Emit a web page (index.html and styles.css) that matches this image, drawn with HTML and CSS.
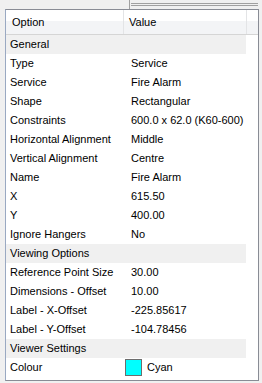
FILE: index.html
```html
<!DOCTYPE html>
<html lang="en">
<head>
    <meta charset="UTF-8">
    <title>Properties</title>
    <link rel="stylesheet" href="styles.css">
</head>
<body>
    <div class="topbar">
        <div class="grip"></div>
        <div class="rails"></div>
    </div>
    <div class="frame">
        <div class="panel">
            <div class="head">
                <div class="hcell col-opt">Option</div>
                <div class="hcell col-val">Value</div>
                <div class="hcell col-pad"></div>
            </div>
            <div class="rows">
                <div class="group">General</div>
                <div class="row"><span class="opt">Type</span><span class="val">Service</span></div>
                <div class="row"><span class="opt">Service</span><span class="val">Fire Alarm</span></div>
                <div class="row"><span class="opt">Shape</span><span class="val">Rectangular</span></div>
                <div class="row"><span class="opt">Constraints</span><span class="val">600.0 x 62.0 (K60-600)</span></div>
                <div class="row"><span class="opt">Horizontal Alignment</span><span class="val">Middle</span></div>
                <div class="row"><span class="opt">Vertical Alignment</span><span class="val">Centre</span></div>
                <div class="row"><span class="opt">Name</span><span class="val">Fire Alarm</span></div>
                <div class="row"><span class="opt">X</span><span class="val">615.50</span></div>
                <div class="row"><span class="opt">Y</span><span class="val">400.00</span></div>
                <div class="row"><span class="opt">Ignore Hangers</span><span class="val">No</span></div>
                <div class="group">Viewing Options</div>
                <div class="row"><span class="opt">Reference Point Size</span><span class="val">30.00</span></div>
                <div class="row"><span class="opt">Dimensions - Offset</span><span class="val">10.00</span></div>
                <div class="row"><span class="opt">Label - X-Offset</span><span class="val">-225.85617</span></div>
                <div class="row"><span class="opt">Label - Y-Offset</span><span class="val">-104.78456</span></div>
                <div class="group">Viewer Settings</div>
                <div class="row"><span class="opt">Colour</span><span class="val colour"><i class="swatch"></i>Cyan</span></div>
            </div>
        </div>
    </div>
</body>
</html>
```

FILE: styles.css
```css
html, body {
    margin: 0;
    padding: 0;
}
body {
    width: 262px;
    height: 383px;
    background: #f0f0f0;
    font-family: "Liberation Sans", Arial, sans-serif;
    font-size: 11px;
    color: #000;
    overflow: hidden;
}
.topbar {
    height: 9px;
    display: flex;
}
.grip {
    width: 1px;
    height: 9px;
    margin-left: 129px;
    background: #a0a0a0;
}
.rails {
    flex: 1;
    margin: 3px 4px 0 1px;
    height: 1px;
    border-top: 1px solid #a0a0a0;
    border-bottom: 1px solid #a0a0a0;
}
.frame {
    padding-left: 5px;
}
.panel {
    width: 252px;
    height: 370px;
    background: #fff;
    border: 1px solid #898c95;
    border-left-color: #9aa9c2;
}
.head {
    display: flex;
    height: 24px;
    border-bottom: 1px solid #d5d5d5;
    background: linear-gradient(#ffffff 0, #ffffff 45%, #f3f4f6 46%, #f3f4f6 100%);
}
.hcell {
    display: flex;
    align-items: center;
    border-right: 1px solid #e3e4e6;
    box-sizing: border-box;
}
.col-opt {
    width: 118px;
    padding-left: 6px;
}
.col-val {
    width: 123px;
    padding-left: 5px;
}
.col-pad {
    flex: 1;
    border-right: none;
}
.group {
    height: 19px;
    line-height: 19px;
    width: 240px;
    padding-left: 4px;
    box-sizing: border-box;
    background: #f0f0f0;
}
.row {
    display: flex;
    height: 19px;
    line-height: 19px;
}
.opt {
    width: 120px;
    padding-left: 4px;
    white-space: nowrap;
}
.val {
    padding-left: 1px;
    white-space: nowrap;
}
.colour {
    display: flex;
    align-items: center;
    margin-left: -6px;
}
.swatch {
    display: block;
    width: 17px;
    height: 17px;
    background: #00ffff;
    border: 1px solid #6d6d6d;
    box-sizing: border-box;
    margin-right: 5px;
}
```
